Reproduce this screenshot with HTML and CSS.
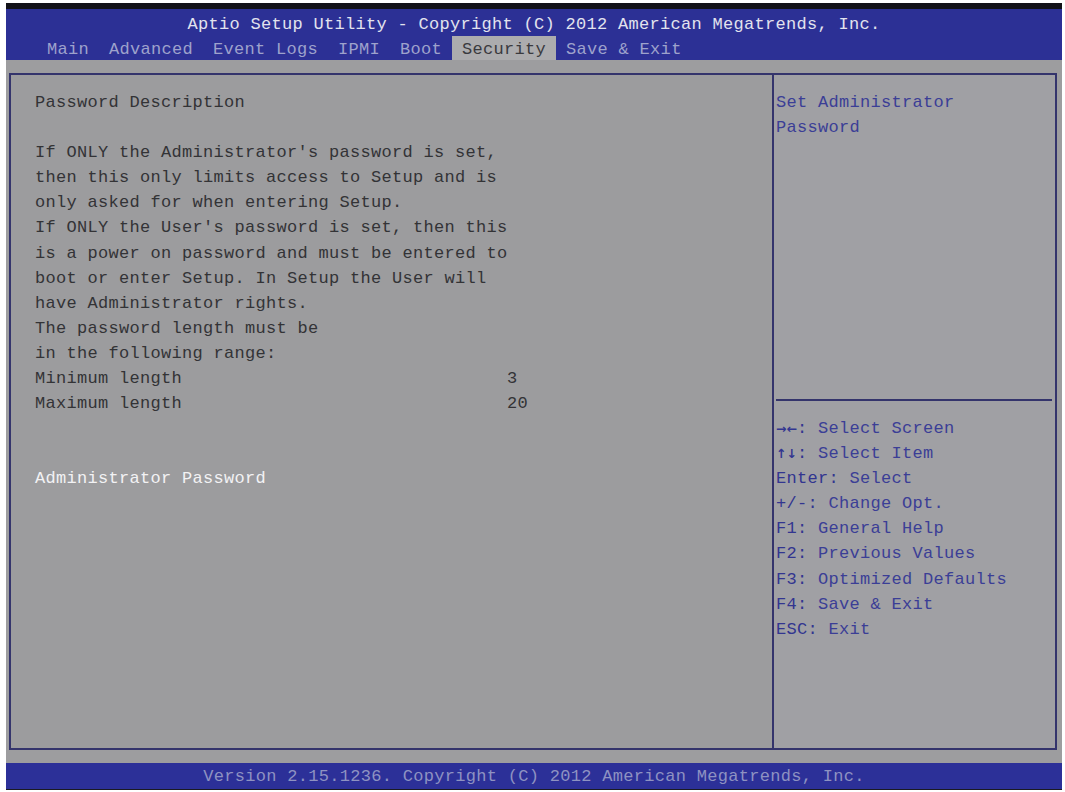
FILE: index.html
```html
<!DOCTYPE html>
<html>
<head>
<meta charset="utf-8">
<link rel="stylesheet" href="styles.css">
</head>
<body>
<div class="screen">
  <div class="topstrip"></div>
  <div class="header">
    <div class="title">Aptio Setup Utility - Copyright (C) 2012 American Megatrends, Inc.</div>
    <div class="tabs">
      <span class="tab">Main</span>
      <span class="tab">Advanced</span>
      <span class="tab">Event Logs</span>
      <span class="tab">IPMI</span>
      <span class="tab">Boot</span>
      <span class="tab active">Security</span>
      <span class="tab">Save &amp; Exit</span>
    </div>
  </div>
  <div class="main">
    <div class="box">
      <div class="left">
        <div class="line">Password Description</div>
        <div class="line"></div>
        <div class="line">If ONLY the Administrator's password is set,</div>
        <div class="line">then this only limits access to Setup and is</div>
        <div class="line">only asked for when entering Setup.</div>
        <div class="line">If ONLY the User's password is set, then this</div>
        <div class="line">is a power on password and must be entered to</div>
        <div class="line">boot or enter Setup. In Setup the User will</div>
        <div class="line">have Administrator rights.</div>
        <div class="line">The password length must be</div>
        <div class="line">in the following range:</div>
        <div class="line row"><span class="label">Minimum length</span><span>3</span></div>
        <div class="line row"><span class="label">Maximum length</span><span>20</span></div>
        <div class="line"></div>
        <div class="line"></div>
        <div class="line item">Administrator Password</div>
      </div>
      <div class="right">
        <div class="helptop">
          <div class="line">Set Administrator</div>
          <div class="line">Password</div>
        </div>
        <div class="sep"></div>
        <div class="keys">
          <div class="line"><span class="k arrow">→←</span><span class="k">:</span> Select Screen</div>
          <div class="line"><span class="k arrow">↑↓</span><span class="k">:</span> Select Item</div>
          <div class="line"><span class="k">Enter:</span> Select</div>
          <div class="line"><span class="k">+/-:</span> Change Opt.</div>
          <div class="line"><span class="k">F1:</span> General Help</div>
          <div class="line"><span class="k">F2:</span> Previous Values</div>
          <div class="line"><span class="k">F3:</span> Optimized Defaults</div>
          <div class="line"><span class="k">F4:</span> Save &amp; Exit</div>
          <div class="line"><span class="k">ESC:</span> Exit</div>
        </div>
      </div>
    </div>
  </div>
  <div class="footer">Version 2.15.1236. Copyright (C) 2012 American Megatrends, Inc.</div>
  <div class="bottomstrip"></div>
</div>
</body>
</html>
```
FILE: styles.css
```css
html, body {
  margin: 0;
  padding: 0;
  background: #ffffff;
}
body {
  font-family: "Liberation Mono", "DejaVu Sans Mono", monospace;
  font-size: 17px;
  letter-spacing: 0.3px;
}
.screen {
  margin-left: 6px;
  margin-top: 3px;
  width: 1056px;
  height: 787px;
  display: flex;
  flex-direction: column;
  background: #9d9d9f;
}
.topstrip {
  height: 6px;
  background: #121218;
}
.header {
  height: 51px;
  background: #2c3095;
  display: flex;
  flex-direction: column;
}
.title {
  height: 27px;
  line-height: 32px;
  text-align: center;
  color: #e2e3ee;
  white-space: pre;
}
.tabs {
  height: 24px;
  display: flex;
  padding-left: 31px;
  line-height: 28px;
  white-space: pre;
}
.tab {
  padding: 0 10px;
  color: #9ea2cc;
}
.tab.active {
  background: #acacae;
  color: #3a3a3e;
}
.main {
  height: 703px;
  display: flex;
  flex-direction: column;
}
.box {
  margin: 13px 5px 13px 3px;
  flex: 1;
  border: 2px solid #34346c;
  display: flex;
  background: #9c9c9e;
}
.left {
  width: 737px;
  padding: 15px 0 0 24px;
  color: #333336;
}
.line {
  height: 25.1px;
  line-height: 25.1px;
  white-space: pre;
}
.row {
  display: flex;
}
.label {
  width: 472px;
}
.item {
  color: #f2f2f4;
}
.right {
  flex: 1;
  border-left: 2px solid #34346c;
  display: flex;
  flex-direction: column;
  color: #3b3e96;
  background: #a0a0a4;
}
.helptop {
  height: 309px;
  padding: 15px 0 0 2px;
}
.sep {
  height: 2px;
  margin: 0 3px 0 2px;
  background: #34346c;
}
.keys {
  padding: 15px 0 0 2px;
}
.k {
  color: #323590;
}
.arrow {
  display: inline-block;
  width: 21px;
  vertical-align: top;
  line-height: 25.1px;
  font-family: "DejaVu Sans", sans-serif;
  font-weight: bold;
  font-size: 12.5px;
  letter-spacing: 0;
}
.footer {
  height: 26px;
  line-height: 27px;
  background: #2c3098;
  color: #8e92c2;
  text-align: center;
  white-space: pre;
}
.bottomstrip {
  height: 1px;
  background: #1a1a22;
}
```
